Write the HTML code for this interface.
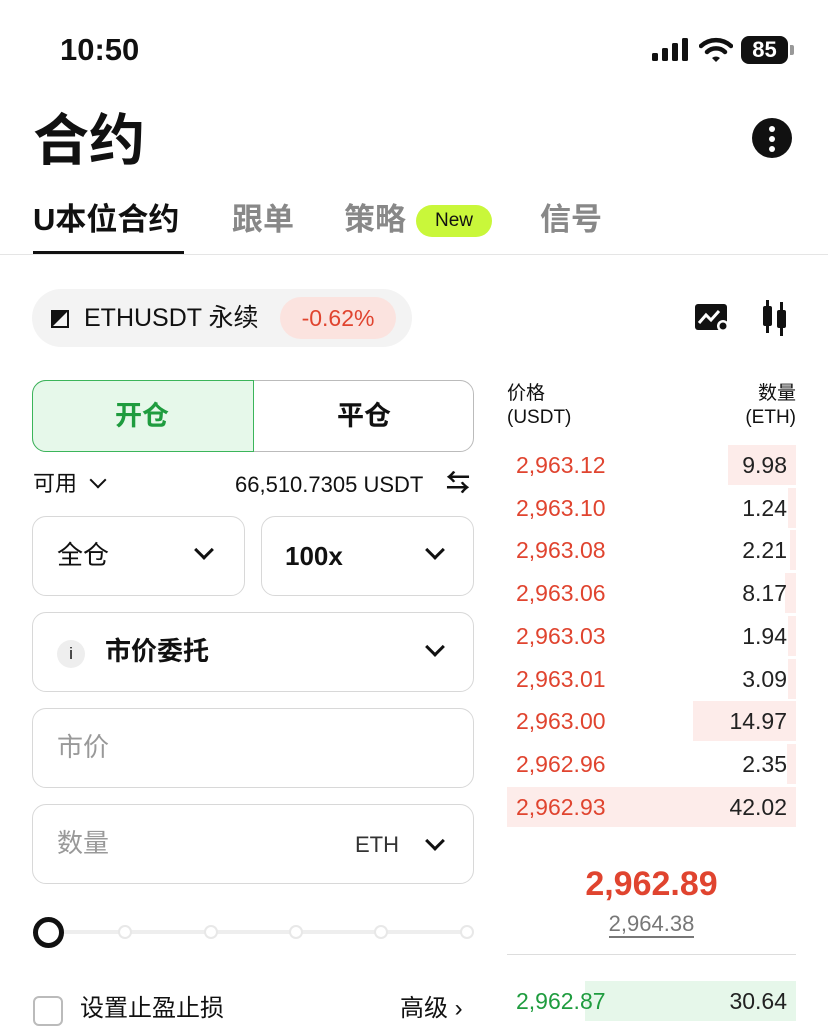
<!DOCTYPE html>
<html><head><meta charset="utf-8"><style>
*{margin:0;padding:0;box-sizing:border-box}
body{width:828px;height:1012px;overflow:hidden;background:#fff;font-family:"Liberation Sans","Noto Sans CJK SC",sans-serif;color:#111;position:relative;line-height:1.2}
.a{position:absolute}
.box{position:absolute;border:1.5px solid #d8d8d8;border-radius:14px}
.ph{color:#999}
.row{position:absolute;left:507px;width:289px;height:40px;font-size:23px;line-height:40px}
.row .bar{position:absolute;right:0;top:0;height:40px;background:#fdecea}
.row .p{position:absolute;left:9px;color:#e0442f}
.row .q{position:absolute;right:9px;color:#222}
.chev{position:absolute;width:14px;height:14px;border-right:3px solid #111;border-bottom:3px solid #111;transform:rotate(45deg)}
</style></head><body>
<div class="a" style="left:60px;top:31px;font-size:31px;font-weight:600">10:50</div>
<svg class="a" style="left:652px;top:38px" width="40" height="24"><rect x="0" y="15" width="6" height="8" rx="1.5" fill="#111"/><rect x="10" y="10" width="6" height="13" rx="1.5" fill="#111"/><rect x="20" y="5" width="6" height="18" rx="1.5" fill="#111"/><rect x="30" y="0" width="6" height="23" rx="1.5" fill="#111"/></svg>
<svg class="a" style="left:699px;top:37px" width="34" height="26" viewBox="0 0 34 26"><path d="M2 9A22 22 0 0 1 32 9" stroke="#111" stroke-width="4.5" fill="none" stroke-linecap="round"/><path d="M8 15A13 13 0 0 1 26 15" stroke="#111" stroke-width="4.5" fill="none" stroke-linecap="round"/><path d="M13 21L17 25L21 21A6 6 0 0 0 13 21Z" fill="#111"/></svg>
<div class="a" style="left:741px;top:36px;width:47px;height:28px;background:#111;border-radius:8px;color:#fff;font-size:22px;font-weight:700;text-align:center;line-height:28px">85</div>
<div class="a" style="left:790px;top:45px;width:4px;height:10px;background:#999;border-radius:0 2px 2px 0"></div>
<div class="a" style="left:33px;top:107px;font-size:56px;font-weight:700">合约</div>
<div class="a" style="left:752px;top:118px;width:40px;height:40px;border-radius:50%;background:#111"></div>
<div class="a" style="left:769px;top:126px;width:6px;height:6px;border-radius:50%;background:#fff;box-shadow:0 10px #fff,0 20px #fff"></div>
<div class="a" style="left:33px;top:201px;font-size:31px;font-weight:700">U本位合约</div>
<div class="a" style="left:33px;top:251px;width:151px;height:4px;background:#111"></div>
<div class="a" style="left:232px;top:201px;font-size:31px;color:#888;font-weight:600">跟单</div>
<div class="a" style="left:344px;top:201px;font-size:31px;color:#888;font-weight:600">策略</div>
<div class="a" style="left:416px;top:205px;width:76px;height:32px;border-radius:16px;background:#c9f73a;font-size:19px;text-align:center;line-height:32px">New</div>
<div class="a" style="left:540px;top:201px;font-size:31px;color:#888;font-weight:600">信号</div>
<div class="a" style="left:0;top:254px;width:828px;height:1px;background:#e5e5e5"></div>

<div class="a" style="left:32px;top:289px;width:380px;height:58px;border-radius:29px;background:#f3f3f3"></div>
<svg class="a" style="left:51px;top:310px" width="18" height="18"><path d="M0 0H18V18H0Z M16 2L2 16H16Z" fill="#111" fill-rule="evenodd"/></svg>
<div class="a" style="left:84px;top:303px;font-size:25px">ETHUSDT 永续</div>
<div class="a" style="left:280px;top:297px;width:116px;height:42px;border-radius:21px;background:#fbe3df;color:#e0442f;font-size:23px;text-align:center;line-height:42px">-0.62%</div>
<svg class="a" style="left:694px;top:303px" width="36" height="30"><rect x="1" y="1" width="32" height="26" rx="3" fill="#111"/><path d="M5 20L12 12L17 17L25 8" stroke="#fff" stroke-width="3" fill="none"/><circle cx="29" cy="23" r="6" fill="#fff"/><circle cx="29" cy="23" r="3.5" fill="#111"/></svg>
<svg class="a" style="left:762px;top:300px" width="26" height="36"><rect x="4" y="0" width="3" height="33" fill="#111"/><rect x="1" y="6" width="9" height="20" rx="2" fill="#111"/><rect x="18" y="2" width="3" height="34" fill="#111"/><rect x="15" y="10" width="9" height="18" rx="2" fill="#111"/></svg>

<div class="a" style="left:32px;top:380px;width:442px;height:72px;border:1.5px solid #bbb;border-radius:14px;overflow:hidden">
<div class="a" style="left:0;top:0;width:221px;height:70px;background:#e6f8ea;border-right:1.5px solid #3bb55a"></div>
</div>
<div class="a" style="left:32px;top:380px;width:222px;height:72px;border:1.5px solid #3bb55a;border-radius:14px 0 0 14px"></div>
<div class="a" style="left:115px;top:400px;font-size:27px;color:#1f9c3f;font-weight:600">开仓</div>
<div class="a" style="left:337px;top:400px;font-size:27px;font-weight:600">平仓</div>

<div class="a" style="left:33px;top:471px;font-size:22px">可用</div>
<div class="chev" style="left:92px;top:474px;width:12px;height:12px;border-width:2.5px"></div>
<div class="a" style="left:235px;top:472px;font-size:22px">66,510.7305 USDT</div>
<div class="a" style="left:446px;top:470px;font-size:24px;font-weight:700">⇆</div>

<div class="box" style="left:32px;top:516px;width:213px;height:80px"></div>
<div class="a" style="left:57px;top:540px;font-size:26px">全仓</div>
<div class="chev" style="left:197px;top:543px"></div>
<div class="box" style="left:261px;top:516px;width:213px;height:80px"></div>
<div class="a" style="left:285px;top:541px;font-size:26px;font-weight:600">100x</div>
<div class="chev" style="left:428px;top:543px"></div>

<div class="box" style="left:32px;top:612px;width:442px;height:80px"></div>
<div class="a" style="left:57px;top:640px;width:28px;height:28px;border-radius:50%;background:#eee;font-size:17px;text-align:center;line-height:28px">i</div>
<div class="a" style="left:105px;top:636px;font-size:26px;font-weight:600">市价委托</div>
<div class="chev" style="left:428px;top:640px"></div>

<div class="box" style="left:32px;top:708px;width:442px;height:80px"></div>
<div class="a ph" style="left:57px;top:732px;font-size:26px">市价</div>

<div class="box" style="left:32px;top:804px;width:442px;height:80px"></div>
<div class="a ph" style="left:57px;top:828px;font-size:26px">数量</div>
<div class="a" style="left:355px;top:832px;font-size:22px;color:#333">ETH</div>
<div class="chev" style="left:428px;top:834px"></div>

<div class="a" style="left:50px;top:930px;width:420px;height:4px;background:#eee"></div>
<div class="a" style="left:33px;top:917px;width:31px;height:31px;border-radius:50%;border:5px solid #111;background:#fff"></div>
<div class="a" style="left:118px;top:925px;width:14px;height:14px;border-radius:50%;border:2px solid #e8e8e8;background:#fff"></div>
<div class="a" style="left:204px;top:925px;width:14px;height:14px;border-radius:50%;border:2px solid #e8e8e8;background:#fff"></div>
<div class="a" style="left:289px;top:925px;width:14px;height:14px;border-radius:50%;border:2px solid #e8e8e8;background:#fff"></div>
<div class="a" style="left:374px;top:925px;width:14px;height:14px;border-radius:50%;border:2px solid #e8e8e8;background:#fff"></div>
<div class="a" style="left:460px;top:925px;width:14px;height:14px;border-radius:50%;border:2px solid #e8e8e8;background:#fff"></div>

<div class="a" style="left:33px;top:996px;width:30px;height:30px;border:2px solid #bbb;border-radius:6px"></div>
<div class="a" style="left:80px;top:995px;font-size:24px">设置止盈止损</div>
<div class="a" style="left:400px;top:995px;font-size:24px">高级 ›</div>

<div class="a" style="left:507px;top:382px;font-size:19px;line-height:24px">价格<br>(USDT)</div>
<div class="a" style="left:700px;top:382px;width:96px;text-align:right;font-size:19px;line-height:24px">数量<br>(ETH)</div>

<div class="row" style="top:445px"><div class="bar" style="width:68px"></div><span class="p">2,963.12</span><span class="q">9.98</span></div>
<div class="row" style="top:488px"><div class="bar" style="width:8px"></div><span class="p">2,963.10</span><span class="q">1.24</span></div>
<div class="row" style="top:530px"><div class="bar" style="width:6px"></div><span class="p">2,963.08</span><span class="q">2.21</span></div>
<div class="row" style="top:573px"><div class="bar" style="width:11px"></div><span class="p">2,963.06</span><span class="q">8.17</span></div>
<div class="row" style="top:616px"><div class="bar" style="width:8px"></div><span class="p">2,963.03</span><span class="q">1.94</span></div>
<div class="row" style="top:659px"><div class="bar" style="width:8px"></div><span class="p">2,963.01</span><span class="q">3.09</span></div>
<div class="row" style="top:701px"><div class="bar" style="width:103px"></div><span class="p">2,963.00</span><span class="q">14.97</span></div>
<div class="row" style="top:744px"><div class="bar" style="width:9px"></div><span class="p">2,962.96</span><span class="q">2.35</span></div>
<div class="row" style="top:787px"><div class="bar" style="width:289px"></div><span class="p">2,962.93</span><span class="q">42.02</span></div>

<div class="a" style="left:507px;top:864px;width:289px;text-align:center;font-size:34px;font-weight:700;color:#e0442f">2,962.89</div>
<div class="a" style="left:507px;top:911px;width:289px;text-align:center;font-size:22px;color:#777"><span style="border-bottom:2px solid #777">2,964.38</span></div>
<div class="a" style="left:507px;top:954px;width:289px;height:1px;background:#ddd"></div>
<div class="row" style="top:981px"><div class="bar" style="width:211px;background:#e6f7ea"></div><span class="p" style="color:#1f9c3f">2,962.87</span><span class="q">30.64</span></div>
</body></html>
